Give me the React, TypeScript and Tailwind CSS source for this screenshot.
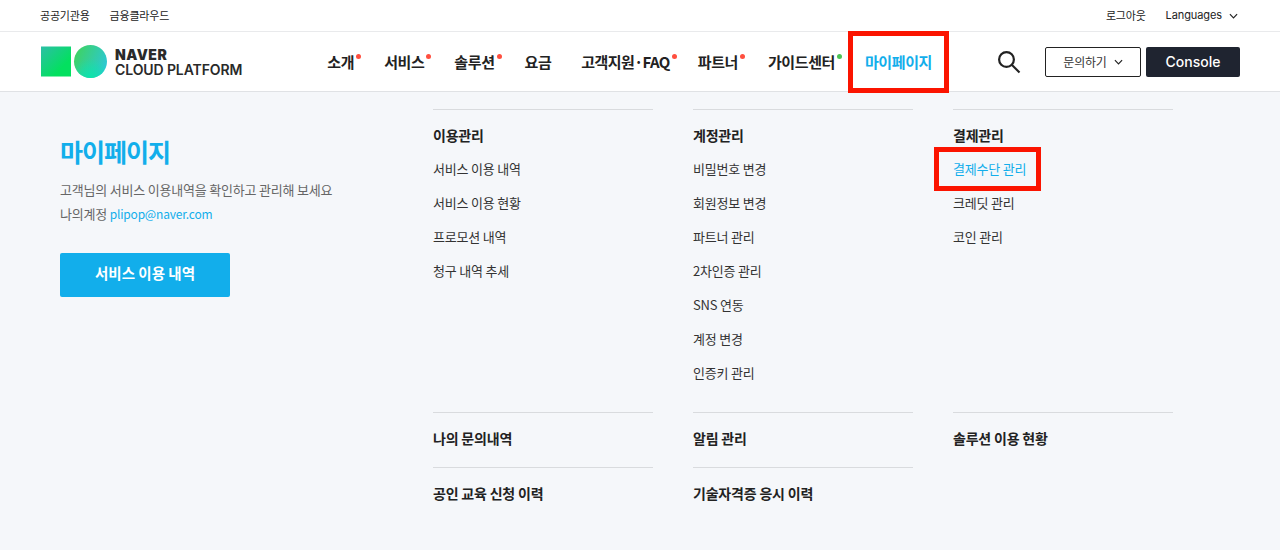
const KR = "font-['Noto_Sans_CJK_KR','Noto_Sans',sans-serif]"

const navItems = [
  { label: "소개", dot: "red", ml: "ml-0" },
  { label: "서비스", dot: "red", ml: "ml-[30px]" },
  { label: "솔루션", dot: "red", ml: "ml-[30px]" },
  { label: "요금", dot: "", ml: "ml-[30px]" },
  { label: "고객지원·FAQ", dot: "red", ml: "ml-[30px] tracking-[-0.6px]" },
  { label: "파트너", dot: "red", ml: "ml-[28px]" },
  { label: "가이드센터", dot: "green", ml: "ml-[30px]" },
]

const menuTop = [
  { title: "이용관리", links: ["서비스 이용 내역", "서비스 이용 현황", "프로모션 내역", "청구 내역 추세"] },
  { title: "계정관리", links: ["비밀번호 변경", "회원정보 변경", "파트너 관리", "2차인증 관리", "SNS 연동", "계정 변경", "인증키 관리"] },
  { title: "결제관리", links: ["결제수단 관리", "크레딧 관리", "코인 관리"] },
]

const menuBottom = [
  ["나의 문의내역", "알림 관리", "솔루션 이용 현황"],
  ["공인 교육 신청 이력", "기술자격증 응시 이력", ""],
]

function Chevron({ className }: { className: string }) {
  return (
    <svg viewBox="0 0 10 6" className={className} fill="none" stroke="#222" strokeWidth="1.3">
      <path d="M1 1l4 4 4-4" />
    </svg>
  )
}

function Logo() {
  return (
    <div className="flex shrink-0 items-center">
      <svg width="66" height="33" viewBox="0 0 66 33">
        <defs>
          <linearGradient id="sq" x1="0" y1="0" x2="1" y2="1">
            <stop offset="0" stopColor="#2cbfa6" />
            <stop offset="0.7" stopColor="#03e05f" />
          </linearGradient>
          <linearGradient id="ci" x1="0" y1="0.2" x2="1" y2="0.6">
            <stop offset="0" stopColor="#3fd35e" />
            <stop offset="1" stopColor="#2cc8d4" />
          </linearGradient>
          <radialGradient id="mint" cx="0.5" cy="1" r="0.6">
            <stop offset="0" stopColor="#0ae5aa" />
            <stop offset="1" stopColor="#0ae5aa" stopOpacity="0" />
          </radialGradient>
        </defs>
        <rect x="0" y="1.5" width="30" height="30" fill="url(#sq)" />
        <circle cx="49.5" cy="16.5" r="16.5" fill="url(#ci)" />
        <circle cx="49.5" cy="16.5" r="16.5" fill="url(#mint)" />
      </svg>
      <div className="ml-2 whitespace-nowrap font-['Inter',sans-serif] text-[#2a2a2a]">
        <div className="text-[14px] leading-[15px] font-black tracking-[0.5px]">NAVER</div>
        <div className="text-[14px] leading-[15px] font-semibold tracking-[-0.1px]">CLOUD PLATFORM</div>
      </div>
    </div>
  )
}

function Header() {
  return (
    <header className="bg-white">
      <div className="flex h-8 items-center justify-between border-b border-[#e9eaec] px-10 text-[11px] tracking-[-0.2px] text-[#222]">
        <div className="flex gap-5">
          <span>공공기관용</span>
          <span>금융클라우드</span>
        </div>
        <div className="flex items-center">
          <span>로그아웃</span>
          <span className="ml-5 font-['Inter',sans-serif] tracking-[-0.1px]">Languages</span>
          <Chevron className="ml-[7px] mr-[2px] h-[6px] w-[9px]" />
        </div>
      </div>
      <div className="relative flex h-[60px] items-center border-b border-[#e0e2e5] pl-[41px] pr-10">
        <Logo />
        <nav className="ml-[85px] flex shrink-0 items-center whitespace-nowrap pt-[1px] text-[15px] font-bold tracking-[-0.4px] text-[#222]">
          {navItems.map((item) => (
            <span key={item.label} className={`relative ${item.ml}`}>
              {item.label}
              {item.dot === "red" && <i className="absolute -right-[7px] top-[3px] h-[5px] w-[5px] rounded-full bg-[#ff4f3f]" />}
              {item.dot === "green" && <i className="absolute -right-[7px] top-[3px] h-[5px] w-[5px] rounded-full bg-[#4cc355]" />}
            </span>
          ))}
          <span className="ml-[30px] text-[#12aeeb]">마이페이지</span>
        </nav>
        <svg className="ml-[65px] shrink-0" width="24" height="24" viewBox="0 0 24 24" fill="none" stroke="#222" strokeWidth="2.2">
          <circle cx="9.5" cy="9.5" r="7.4" />
          <path d="M15 15l7.5 7.5" />
        </svg>
        <button className="ml-[24px] flex h-[30px] w-[96px] shrink-0 items-center justify-center rounded-[2px] border border-[#222] bg-white text-[12px] tracking-[-0.2px] text-[#333]">
          문의하기
          <Chevron className="ml-[7px] h-[6px] w-[9px]" />
        </button>
        <button className="ml-[5px] h-[30px] w-[94px] shrink-0 rounded-[2px] bg-[#1f2430] font-['Inter',sans-serif] text-[14px] font-medium text-white">
          Console
        </button>
        {/* red annotation */}
        <div className="absolute left-[848px] -top-px h-[62px] w-[101px] border-[5px] border-[#fb1400]" />
      </div>
    </header>
  )
}

function MenuColumn({ title, links }: { title: string; links: string[] }) {
  return (
    <div className="w-[220px] border-t border-[#d9dbde] pt-[15px]">
      <div className="text-[14px] leading-[20px] font-bold tracking-[-0.2px] text-[#222]">{title}</div>
      <ul className="mt-[14px]">
        {links.map((link) => (
          <li
            key={link}
            className={`relative h-[34px] text-[13px] leading-[20px] tracking-[-0.2px] ${link === "결제수단 관리" ? "text-[#12aeeb]" : "text-[#333]"}`}
          >
            {link}
            {link === "결제수단 관리" && (
              <div className="absolute -left-[19px] -top-[12px] h-[44px] w-[107px] border-[5px] border-[#fb1400]" />
            )}
          </li>
        ))}
      </ul>
    </div>
  )
}

export default function App() {
  return (
    <div className={`h-[550px] w-[1280px] overflow-hidden bg-[#f5f7fa] ${KR}`}>
      <Header />
      <main className="flex pt-[17px]">
        <section className="w-[433px] pl-[60px] pt-6">
          <h1 className="text-[25px] leading-[36px] font-bold tracking-[-1px] text-[#12aeeb]">마이페이지</h1>
          <p className="mt-[9px] text-[13px] leading-[24px] tracking-[-0.2px] text-[#666]">
            고객님의 서비스 이용내역을 확인하고 관리해 보세요
            <br />
            나의계정 <span className="text-[12px] text-[#12aeeb]">plipop@naver.com</span>
          </p>
          <button className="mt-[27px] h-[44px] w-[170px] rounded-[2px] bg-[#12aeeb] pb-[5px] text-[14.5px] font-bold text-white">
            서비스 이용 내역
          </button>
        </section>
        <section className="flex-1">
          <div className="flex h-[303px] gap-10">
            {menuTop.map((col) => (
              <MenuColumn key={col.title} title={col.title} links={col.links} />
            ))}
          </div>
          {menuBottom.map((row) => (
            <div key={row[0]} className="flex h-[55px] gap-10">
              {row.map((label, i) => (
                <div key={i} className={`w-[220px] pt-[15px] text-[14px] leading-[20px] font-bold tracking-[-0.2px] text-[#222] ${label ? "border-t border-[#d9dbde]" : ""}`}>
                  {label}
                </div>
              ))}
            </div>
          ))}
        </section>
      </main>
    </div>
  )
}
